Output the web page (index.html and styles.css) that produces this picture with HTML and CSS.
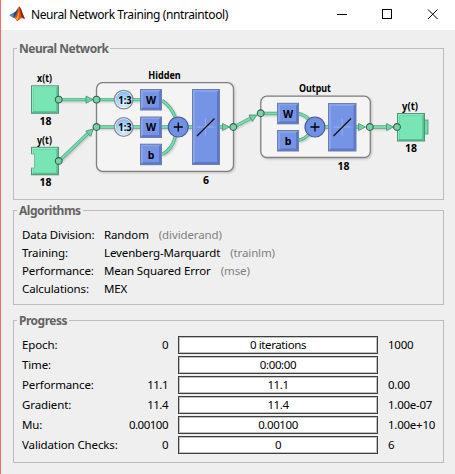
FILE: index.html
```html
<!DOCTYPE html>
<html lang="en">
<head>
<meta charset="utf-8">
<title>Neural Network Training (nntraintool)</title>
<link rel="stylesheet" href="styles.css">
</head>
<body>
<div class="window">
  <header class="titlebar">
    <svg class="logo" width="16" height="16" viewBox="0 0 16 16">
      <path d="M0 9 L5 6.5 L8 9 L4.5 12Z" fill="#3d8fc4"/>
      <path d="M5 6.5 C7 6 8 3 10 .5 L8 9 L4.5 12Z" fill="#284a70"/>
      <path d="M10 .5 C8.7 4 8 9 4.5 12 C6 11.5 7 13 8 15.5 C10.5 14 11 10.5 16 13 C13.5 8 12 1 10 .5Z" fill="#d95319"/>
      <path d="M10 .5 C12 1 13.5 8 16 13 L12.5 11 C11.8 7 11 3 10 .5Z" fill="#8c2412"/>
      <path d="M9.5 4 C9.5 8 8.5 11 7 12.5 L8 15 C10 13 10.5 8 9.5 4Z" fill="#f4a43a"/>
    </svg>
    <h1 class="title">Neural Network Training (nntraintool)</h1>
    <svg class="controls" width="102" height="12" viewBox="0 0 102 12">
      <path d="M0 6.500H10M45.500 1.500H54.500V10.500H45.500Z" shape-rendering="crispEdges"/>
      <path d="M91 1.500L100.500 11M100.500 1.500L91 11"/>
    </svg>
  </header>

  <main class="content">
    <section class="panel network">
      <h2 class="legend">Neural Network</h2>
      <svg class="diagram" width="429" height="142" viewBox="14 57 429 142">
        <defs>
          <radialGradient id="delay" cx=".5" cy=".75" r=".7">
            <stop offset="0" stop-color="#e4f6ff"/><stop offset=".5" stop-color="#b0d8fc"/><stop offset="1" stop-color="#8fbcf0"/>
          </radialGradient>
          <filter id="shadow" x="-20%" y="-20%" width="150%" height="150%">
            <feDropShadow dx="1" dy="1" stdDeviation=".8" flood-color="#000" flood-opacity=".2"/>
          </filter>
          <g id="small">
            <rect width="22" height="21.500" fill="#6f7fa8"/>
            <path d="M1 1H21L19 3H3V18.500L1 20.500Z" fill="#88a3ee"/>
            <path d="M21 1V20.500H1L3 18.500H19V3Z" fill="#5c78cc"/>
            <rect x="3" y="3" width="16" height="15.500" fill="#7594e6"/>
          </g>
          <g id="sum">
            <circle r="10" fill="#7090e4" stroke="#4a5b94" stroke-width="1.200"/>
            <path d="M-4.500 0H4.500M0-4.500V4.500" stroke="#000" stroke-width="1.300"/>
          </g>
          <g id="terminal">
            <rect width="28" height="28.500" fill="#4f9576"/>
            <path d="M1 1H27L25.500 2.500H2.500V26L1 27.500Z" fill="#90edc3"/>
            <path d="M27 1V27.500H1L2.500 26H25.500V2.500Z" fill="#5bbf94"/>
            <rect x="2.500" y="2.500" width="23" height="23.500" fill="#78e6b4"/>
          </g>
          <circle id="port" r="3.400" fill="#74d5a6" stroke="#3a5f4d" stroke-width="1.100"/>
          <path id="head" d="M-6.500-3.600L.5 0L-6.500 3.600Z" fill="#6fd3a4" stroke="#4a9173" stroke-width=".8"/>
        </defs>

        <g filter="url(#shadow)" fill="#f4f4f4" stroke="#808080" stroke-width="1.300">
          <rect x="96.500" y="82.700" width="137" height="88.600" rx="6"/>
          <rect x="260.800" y="96.200" width="109.500" height="61.300" rx="6"/>
        </g>

        <g filter="url(#shadow)">
          <g class="wire-edge">
            <path d="M59 99.600H87M59 161L89 132.500M97 99.600H140M97 127H192M162 100.500Q171 106 175.500 118M162 154.500Q172 150 175.500 136M220 127H224M234 127L251 118M261 113.500H277M298 113.500Q305 115 309 119.500M298 140.500Q305 139 309 134M322 127H328M356 127H360M370 127H388"/>
          </g>
          <g class="wire">
            <path d="M59 99.600H87M59 161L89 132.500M97 99.600H140M97 127H192M162 100.500Q171 106 175.500 118M162 154.500Q172 150 175.500 136M220 127H224M234 127L251 118M261 113.500H277M298 113.500Q305 115 309 119.500M298 140.500Q305 139 309 134M322 127H328M356 127H360M370 127H388"/>
          </g>
        </g>
        <use href="#head" x="92.500" y="99.600"/>
        <use href="#head" transform="translate(93 129.300) rotate(-43)"/>
        <use href="#head" x="229" y="127"/>
        <use href="#head" transform="translate(256.500 115.300) rotate(-27)"/>
        <use href="#head" x="365" y="127"/>
        <use href="#head" x="393" y="127"/>

        <rect x="424.500" y="120" width="3.500" height="14" fill="#72d9aa" stroke="#4d9c78" stroke-width=".8"/>
        <use href="#terminal" x="31" y="85.300"/>
        <use href="#terminal" x="31" y="146.800"/>
        <use href="#terminal" x="397" y="113"/>
        <g>
          <use href="#small" x="140" y="89"/><use href="#small" x="140" y="116.500"/><use href="#small" x="140" y="143.700"/>
          <use href="#small" x="277" y="102.800"/><use href="#small" x="277" y="130"/>
          <rect x="192" y="89" width="28" height="76" fill="#6f7fa8"/>
          <path d="M193 90H219L217 92H195V162L193 164Z" fill="#88a3ee"/>
          <path d="M219 90V164H193L195 162H217V92Z" fill="#5c78cc"/>
          <rect x="195" y="92" width="22" height="70" fill="#7594e6"/>
          <rect x="328" y="103" width="28.500" height="48.500" fill="#6f7fa8"/>
          <path d="M329 104H355.500L353.500 106H331V148.500L329 150.500Z" fill="#88a3ee"/>
          <path d="M355.500 104V150.500H329L331 148.500H353.500V106Z" fill="#5c78cc"/>
          <rect x="331" y="106" width="22.500" height="42.500" fill="#7594e6"/>
          <use href="#sum" x="178.300" y="127"/><use href="#sum" x="315" y="127"/>
          <circle cx="123.700" cy="99.600" r="9.300" fill="#fff" stroke="#858b94" stroke-width="1.300"/>
          <circle cx="123.700" cy="99.600" r="8" fill="url(#delay)"/>
          <circle cx="123.700" cy="127" r="9.300" fill="#fff" stroke="#858b94" stroke-width="1.300"/>
          <circle cx="123.700" cy="127" r="8" fill="url(#delay)"/>
        </g>
        <path d="M30 154H34.500V168H30Z" fill="#efefef"/>
        <path d="M31 154H34.500V168H31" fill="none" stroke="#74ad94" stroke-width=".8"/>
        <path d="M197 127H214M205.500 118.500V135.500M333.500 127H351M342.200 118.500V135.500" stroke="#9aafea" stroke-width="1"/>
        <path d="M197 136L214.500 118.500M333.500 136L351 118.500" stroke="#111" stroke-width="1.200"/>

        <use href="#port" x="58.700" y="99.600"/><use href="#port" x="58.700" y="161"/>
        <use href="#port" x="96.500" y="99.600"/><use href="#port" x="96.500" y="127"/>
        <use href="#port" x="233.300" y="127"/><use href="#port" x="260.700" y="113.300"/>
        <use href="#port" x="369.800" y="127"/><use href="#port" x="397" y="127"/>

        <g class="label">
          <text x="44.500" y="81.500" textLength="15" lengthAdjust="spacingAndGlyphs">x(t)</text><text x="45.500" y="124.500">18</text>
          <text x="44.500" y="143.500" textLength="15" lengthAdjust="spacingAndGlyphs">y(t)</text><text x="45.500" y="185.500">18</text>
          <text x="164.500" y="78.500" textLength="32.500" lengthAdjust="spacingAndGlyphs">Hidden</text><text x="206" y="183.500">6</text>
          <text x="315" y="91.500" textLength="32" lengthAdjust="spacingAndGlyphs">Output</text><text x="343.500" y="169.500">18</text>
          <text x="410" y="109.500" textLength="16" lengthAdjust="spacingAndGlyphs">y(t)</text><text x="411" y="151.500">18</text>
          <text x="125" y="104" textLength="13.500" lengthAdjust="spacingAndGlyphs">1:3</text>
          <text x="125" y="131.300" textLength="13.500" lengthAdjust="spacingAndGlyphs">1:3</text>
          <text x="151" y="104">W</text><text x="151" y="131.300">W</text><text x="151" y="158.500">b</text>
          <text x="288" y="117.500">W</text><text x="288" y="145.300">b</text>
        </g>
      </svg>
    </section>

    <section class="panel algorithms">
      <h2 class="legend">Algorithms</h2>
      <dl class="facts">
        <dt>Data Division:</dt><dd>Random<span class="hint">(dividerand)</span></dd>
        <dt>Training:</dt><dd>Levenberg-Marquardt<span class="hint">(trainlm)</span></dd>
        <dt>Performance:</dt><dd>Mean Squared Error<span class="hint">(mse)</span></dd>
        <dt>Calculations:</dt><dd>MEX</dd>
      </dl>
    </section>

    <section class="panel progress">
      <h2 class="legend">Progress</h2>
      <div class="rows">
        <div class="row"><span>Epoch:</span><span class="start">0</span><div class="bar">0 iterations</div><span class="goal">1000</span></div>
        <div class="row"><span>Time:</span><span class="start"></span><div class="bar">0:00:00</div><span class="goal"></span></div>
        <div class="row"><span>Performance:</span><span class="start">11.1</span><div class="bar">11.1</div><span class="goal">0.00</span></div>
        <div class="row"><span>Gradient:</span><span class="start">11.4</span><div class="bar">11.4</div><span class="goal">1.00e-07</span></div>
        <div class="row"><span>Mu:</span><span class="start">0.00100</span><div class="bar">0.00100</div><span class="goal">1.00e+10</span></div>
        <div class="row"><span>Validation Checks:</span><span class="start">0</span><div class="bar">0</div><span class="goal">6</span></div>
      </div>
    </section>
  </main>
</div>
</body>
</html>
```
FILE: styles.css
```css
* { box-sizing: border-box; }

body {
  margin: 0;
  font: 11.5px/18px "Noto Sans", "Open Sans", sans-serif;
  letter-spacing: -.12px;
  color: #000;
  background: #efefef;
}

.window {
  height: 474px;
  border-left: 1px solid #f8696b;
  overflow: hidden;
}

.titlebar {
  display: flex;
  align-items: center;
  height: 30px;
  padding: 0 16px 2px 8px;
  background: #fff;
}

.title {
  margin: 2px 0 0 6px;
  font-size: 12px;
  font-weight: 400;
  letter-spacing: -.4px;
  white-space: nowrap;
}

.controls {
  margin-left: auto;
  fill: none;
  stroke: #000;
  stroke-width: 1;
}

.content { padding: 18px 11px 0 12px; }

.panel { border: 1px solid #bcbcbc; }

.network { height: 152px; margin-bottom: 10px; }
.algorithms { height: 95px; margin-bottom: 15px; }
.progress { height: 143px; }

.legend {
  width: fit-content;
  height: 16px;
  margin: -8px 0 0 3px;
  padding: 0 2px;
  font-size: 12px;
  line-height: 16px;
  font-weight: 700;
  letter-spacing: -.5px;
  color: #646464;
  background: #efefef;
}

.diagram { display: block; }

.wire-edge { fill: none; stroke: #55a583; stroke-width: 3.4; }
.wire { fill: none; stroke: #78dbaf; stroke-width: 2; }

.label {
  font-size: 10.5px;
  font-weight: 700;
  letter-spacing: 0;
  text-anchor: middle;
}

.facts {
  display: grid;
  grid-template-columns: 82px 1fr;
  grid-auto-rows: 18px;
  margin: 7px 0 0 8px;
}

.facts dd { margin: 0; }

.hint { margin-left: 10px; color: #808080; }

.rows {
  display: grid;
  gap: 2px;
  margin: 7px 0 0 8px;
}

.row {
  display: grid;
  grid-template-columns: 98px 58px 200px 1fr;
  height: 18px;
  white-space: nowrap;
}

.start {
  padding-right: 10px;
  text-align: right;
  letter-spacing: -.5px;
}

.goal {
  padding-left: 10px;
  letter-spacing: -.25px;
}

.bar {
  border: 1px solid #3f3f3f;
  box-shadow: inset 0 0 0 1px #c0c0c0;
  background: #fff;
  text-align: center;
  line-height: 15px;
  letter-spacing: -.4px;
}
```
